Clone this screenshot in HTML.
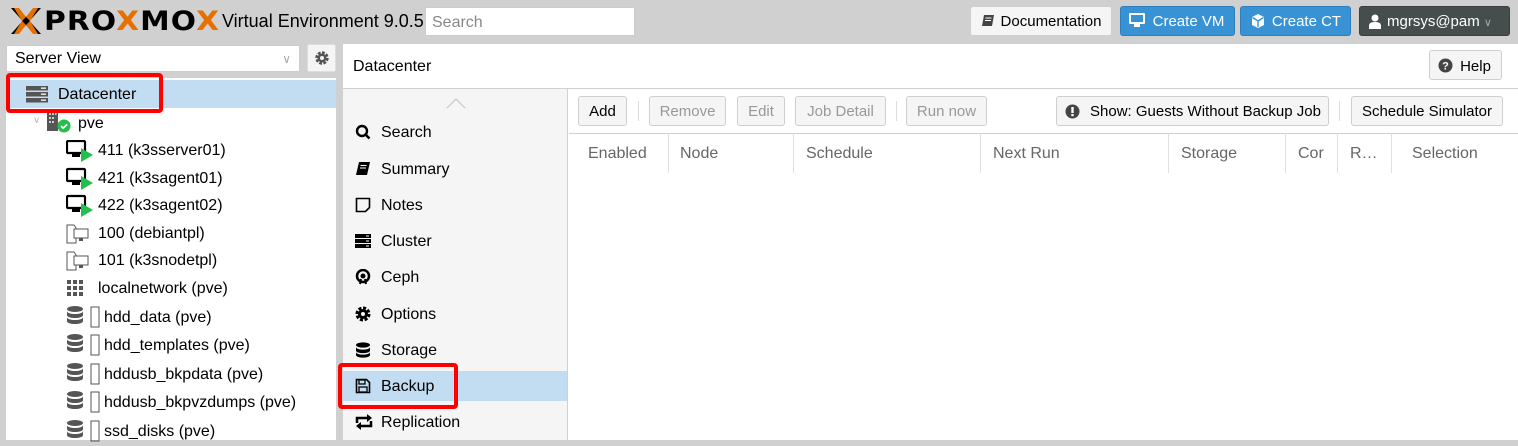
<!DOCTYPE html>
<html><head><meta charset="utf-8"><style>
*{box-sizing:border-box;margin:0;padding:0}
body{width:1518px;height:440px;overflow:hidden;background:#d0d0d0;font-family:"Liberation Sans",Arial,sans-serif;font-size:16px;color:#000;position:relative}
.a{position:absolute}
.btn{position:absolute;height:30px;border:1px solid #cfcfcf;border-radius:3px;background:#f5f5f5;font-size:15px;line-height:29px;text-align:center;color:#000}
.dis{color:#999}
.tr{position:absolute;left:0;height:28px;line-height:30px;white-space:nowrap;font-size:16px}
.nv{position:absolute;left:0;width:224px;height:30px;line-height:31px;padding-left:38px;color:#000;font-size:16px}
.nv svg{position:absolute;left:12px;top:7px}
.gh{position:absolute;top:133px;height:40px;line-height:42px;color:#666;padding-left:19px;border-right:1px solid #e0e0e0;overflow:hidden;white-space:nowrap;font-size:16px}
.red{position:absolute;border:4px solid #f00;border-radius:4px}
</style></head><body>
<svg class="a" style="left:10px;top:7px" width="32" height="28" viewBox="0 0 32 28"><path d="M1 1 L8 1 L31 27 L24 27 Z" fill="#000"/><path d="M24 1 L31 1 L8 27 L1 27 Z" fill="#000"/><path d="M4 1 L9 1 L16 10 L12 14 Z M20 14 L16 18 L23 27 L28 27Z" fill="#e57000"/><path d="M28 1 L23 1 L16 10 L20 14 Z M12 14 L16 18 L9 27 L4 27Z" fill="#e57000"/></svg>
<div class="a" style="left:44px;top:6px;font-size:27px;font-weight:900;letter-spacing:1px;transform:scaleX(1.1);transform-origin:left;color:#000;font-family:'DejaVu Sans',sans-serif">PRO<span style="color:#e57000">X</span>MO<span style="color:#e57000">X</span></div>
<div class="a" style="left:222px;top:11px;font-size:18px;white-space:nowrap">Virtual Environment 9.0.5</div>
<div class="a" style="left:425px;top:7px;width:210px;height:29px;background:#fff;border:1px solid #ccc;color:#888;font-size:16px;line-height:29px;padding-left:6px">Search</div>
<div class="btn" style="left:970px;top:6px;width:142px;height:30px;background:#f5f5f5;padding-left:20px;line-height:30px">Documentation<svg class="a" style="left:10px;top:7px" width="14" height="14" viewBox="0 0 14 14"><path d="M3 1h10l-2 11H1z" fill="#444"/><path d="M4.5 4h6M4 6.5h6" stroke="#fff" stroke-width="1"/></svg></div>
<div class="btn" style="left:1120px;top:6px;width:115px;background:#3892d4;border-color:#2f7fbf;color:#fff;padding-left:22px;line-height:30px">Create VM<svg class="a" style="left:7px;top:5px" width="18" height="16" viewBox="0 0 18 16"><rect x="1" y="1" width="16" height="11" rx="1" fill="#fff"/><rect x="3" y="3" width="12" height="7" fill="#3892d4"/><rect x="6" y="12" width="6" height="3" fill="#fff"/></svg></div>
<div class="btn" style="left:1240px;top:6px;width:111px;background:#3892d4;border-color:#2f7fbf;color:#fff;padding-left:22px;line-height:30px">Create CT<svg class="a" style="left:9px;top:6px" width="16" height="16" viewBox="0 0 16 16"><path d="M8 1l6 3v8l-6 3-6-3V4z" fill="#fff"/><path d="M8 8L2.5 4.5M8 8l5.5-3.5M8 8v6" stroke="#3892d4" stroke-width="1.4" fill="none"/></svg></div>
<div class="btn" style="left:1359px;top:6px;width:151px;background:#464d4d;border-color:#3a3f3f;color:#fff;padding-left:10px;line-height:30px">mgrsys@pam <span style="color:#aaa;font-size:11px">&#8744;</span><svg class="a" style="left:9px;top:7px" width="12" height="15" viewBox="0 0 12 15"><circle cx="6" cy="4" r="3.5" fill="#fff"/><path d="M0 15v-3c0-3 2-4 6-4s6 1 6 4v3z" fill="#fff"/></svg></div>

<div class="a" style="left:6px;top:45px;width:294px;height:27px;background:#fff;border:1px solid #ccc;line-height:26px;padding-left:8px;font-size:16px">Server View<span class="a" style="right:8px;top:0;color:#aaa;font-size:12px">&#8744;</span></div>
<div class="a" style="left:307px;top:44px;width:29px;height:28px;background:#f5f5f5;border:1px solid #ddd;border-radius:2px"><svg class="a" style="left:6px;top:5px" width="16" height="16" viewBox="0 0 16 16"><circle cx="8" cy="8" r="5" fill="none" stroke="#555" stroke-width="3.5" stroke-dasharray="2.6 1.3"/><circle cx="8" cy="8" r="4.5" fill="#555"/><circle cx="8" cy="8" r="2" fill="#f5f5f5"/></svg></div>
<div class="a" style="left:6px;top:78px;width:330px;height:362px;background:#fff;overflow:hidden">
<div class="a" style="left:0;top:2px;width:330px;height:28px;background:#c2ddf2"></div>
<div class="tr" style="top:2px;left:52px">Datacenter</div>
<svg class="a" style="left:20px;top:8px" width="22" height="17" viewBox="0 0 22 17"><g fill="#555"><rect y="0" width="22" height="4.5"/><rect y="6" width="22" height="4.5"/><rect y="12" width="22" height="4.5"/></g><g fill="#fff"><rect x="15" y="1.5" width="5" height="1.3"/><rect x="15" y="7.5" width="5" height="1.3"/><rect x="15" y="13.5" width="5" height="1.3"/></g></svg>
<div class="tr" style="top:31px;left:72px">pve</div>
<span class="a" style="left:27px;top:37px;color:#bbb;font-size:10px">&#8744;</span>
<svg class="a" style="left:41px;top:33px" width="26" height="22" viewBox="0 0 26 22"><rect x="0" y="0" width="11" height="20" fill="#555"/><g fill="#ccc"><rect x="2" y="2" width="2" height="2"/><rect x="5" y="2" width="2" height="2"/><rect x="8" y="2" width="1.5" height="2"/><rect x="2" y="6" width="2" height="2"/><rect x="5" y="6" width="2" height="2"/><rect x="2" y="10" width="2" height="2"/><rect x="5" y="10" width="2" height="2"/></g><circle cx="17" cy="15" r="6.5" fill="#21bf4b"/><path d="M14 15l2.2 2.2 4-4" stroke="#fff" stroke-width="1.8" fill="none"/></svg>
<div class="tr" style="top:58px;left:92px">411 (k3sserver01)</div>
<div class="tr" style="top:86px;left:92px">421 (k3sagent01)</div>
<div class="tr" style="top:113px;left:92px">422 (k3sagent02)</div>
<div class="tr" style="top:141px;left:92px">100 (debiantpl)</div>
<div class="tr" style="top:168px;left:92px">101 (k3snodetpl)</div>
<div class="tr" style="top:196px;left:92px">localnetwork (pve)</div>
<div class="tr" style="top:225px;left:98px">hdd_data (pve)</div>
<div class="tr" style="top:253px;left:98px">hdd_templates (pve)</div>
<div class="tr" style="top:282px;left:98px">hddusb_bkpdata (pve)</div>
<div class="tr" style="top:310px;left:98px">hddusb_bkpvzdumps (pve)</div>
<div class="tr" style="top:339px;left:98px">ssd_disks (pve)</div>
</div>
<svg class="a" style="left:66px;top:140px" width="30" height="140" viewBox="0 0 30 140">
<g id="vm"><rect x="1" y="1" width="18" height="12" rx="1" fill="none" stroke="#000" stroke-width="2.2"/><rect x="6" y="13" width="8" height="4" fill="#000"/><path d="M15 8l12 7-12 7z" fill="#21bf4b"/></g>
<use href="#vm" y="28"/><use href="#vm" y="55"/>
<g transform="translate(0,84)"><path d="M1 1h7l2 3v15H1z" fill="#fff" stroke="#555"/><rect x="8" y="5" width="14" height="9" fill="#fff" stroke="#555"/><rect x="13" y="14" width="4" height="3" fill="#555"/></g>
<g transform="translate(0,111)"><path d="M1 1h7l2 3v15H1z" fill="#fff" stroke="#555"/><rect x="8" y="5" width="14" height="9" fill="#fff" stroke="#555"/><rect x="13" y="14" width="4" height="3" fill="#555"/></g>
</svg>
<svg class="a" style="left:67px;top:280px" width="16" height="16" viewBox="0 0 16 16"><g fill="#555"><rect x="0" y="0" width="4" height="4"/><rect x="6" y="0" width="4" height="4"/><rect x="12" y="0" width="4" height="4"/><rect x="0" y="6" width="4" height="4"/><rect x="6" y="6" width="4" height="4"/><rect x="12" y="6" width="4" height="4"/><rect x="0" y="12" width="4" height="4"/><rect x="6" y="12" width="4" height="4"/><rect x="12" y="12" width="4" height="4"/></g></svg>
<svg class="a" style="left:67px;top:306px" width="36" height="140" viewBox="0 0 36 140">
<g id="db"><ellipse cx="8" cy="3" rx="8" ry="3" fill="#555"/><path d="M0 5c0 4 16 4 16 0v4c0 4-16 4-16 0z M0 11c0 4 16 4 16 0v4c0 4-16 4-16 0z" fill="#555"/><rect x="24" y="1" width="8" height="20" fill="none" stroke="#555"/></g>
<use href="#db" y="28"/><use href="#db" y="57"/><use href="#db" y="85"/><use href="#db" y="114"/>
</svg>
<div class="red" style="left:6px;top:73px;width:157px;height:40px"></div>

<div class="a" style="left:343px;top:44px;width:1175px;height:396px;background:#fff"></div>
<div class="a" style="left:353px;top:58px;font-size:16px">Datacenter</div>
<div class="btn" style="left:1429px;top:50px;width:73px;height:30px;padding-left:20px;line-height:31px">Help<svg class="a" style="left:8px;top:7px" width="15" height="15" viewBox="0 0 15 15"><circle cx="7.5" cy="7.5" r="7" fill="#444"/><text x="7.5" y="11.5" font-size="11" font-weight="bold" fill="#fff" text-anchor="middle" font-family="Liberation Sans">?</text></svg></div>
<div class="a" style="left:343px;top:88px;width:1175px;height:1px;background:#d0d0d0"></div>
<div class="a" style="left:343px;top:89px;width:225px;height:351px;background:#f5f5f5;border-right:1px solid #d0d0d0">
<svg class="a" style="left:103px;top:9px" width="20" height="11" viewBox="0 0 20 11"><path d="M1 10L10 1l9 9" stroke="#ccc" fill="none" stroke-width="1.3"/></svg>
<div class="nv" style="top:28px">Search<svg width="16" height="16" viewBox="0 0 16 16"><circle cx="7" cy="7" r="5" fill="none" stroke="#000" stroke-width="2.4"/><path d="M10 10l4.5 4.5" stroke="#000" stroke-width="2.6"/></svg></div>
<div class="nv" style="top:65px">Summary<svg width="16" height="16" viewBox="0 0 16 16"><path d="M4 1h11l-3 13H1z" fill="#000"/><path d="M5.5 4.5h6M5 7h6" stroke="#fff"/></svg></div>
<div class="nv" style="top:101px">Notes<svg width="16" height="16" viewBox="0 0 16 16"><path d="M1.5 1.5h13v9l-4 4h-9z" fill="none" stroke="#000" stroke-width="1.6"/></svg></div>
<div class="nv" style="top:137px">Cluster<svg width="16" height="16" viewBox="0 0 16 16"><g fill="#000"><rect y="1" width="16" height="4"/><rect y="6" width="16" height="4"/><rect y="11" width="16" height="4"/></g><g fill="#fff"><rect x="11" y="2.5" width="3" height="1"/><rect x="11" y="7.5" width="3" height="1"/><rect x="11" y="12.5" width="3" height="1"/></g></svg></div>
<div class="nv" style="top:173px">Ceph<svg width="16" height="16" viewBox="0 0 16 16"><circle cx="8" cy="7" r="6" fill="none" stroke="#000" stroke-width="2.5"/><circle cx="8" cy="7" r="2.5" fill="#000"/><path d="M5 15l1-5M11 15l-1-5" stroke="#000" stroke-width="2"/></svg></div>
<div class="nv" style="top:210px">Options<svg width="16" height="16" viewBox="0 0 16 16"><circle cx="8" cy="8" r="5.5" fill="none" stroke="#000" stroke-width="4" stroke-dasharray="2.8 1.5"/><circle cx="8" cy="8" r="5" fill="#000"/><circle cx="8" cy="8" r="2" fill="#f5f5f5"/></svg></div>
<div class="nv" style="top:246px">Storage<svg width="16" height="16" viewBox="0 0 16 16"><ellipse cx="8" cy="3" rx="7" ry="2.6" fill="#000"/><path d="M1 5c0 3.5 14 3.5 14 0v3.5c0 3.5-14 3.5-14 0z M1 10c0 3.5 14 3.5 14 0v3c0 3.5-14 3.5-14 0z" fill="#000"/></svg></div>
<div class="nv" style="top:282px;background:#c2ddf2">Backup<svg width="16" height="16" viewBox="0 0 16 16"><path d="M1.5 1.5h10l3 3v10h-13z" fill="none" stroke="#000" stroke-width="1.6"/><rect x="4" y="2" width="6" height="4" fill="none" stroke="#000" stroke-width="1.3"/><rect x="4" y="9" width="8" height="5" fill="none" stroke="#000" stroke-width="1.3"/></svg></div>
<div class="nv" style="top:318px">Replication<svg width="18" height="16" viewBox="0 0 18 16"><path d="M2 9V4h11" stroke="#000" stroke-width="2.5" fill="none"/><path d="M12 0l5 4-5 4z" fill="#000"/><path d="M16 7v5H5" stroke="#000" stroke-width="2.5" fill="none"/><path d="M6 8l-5 4 5 4z" fill="#000"/></svg></div>
</div>
<div class="red" style="left:338px;top:363px;width:120px;height:46px"></div>

<div class="btn" style="left:578px;top:96px;width:49px">Add</div>
<div class="a" style="left:638px;top:101px;width:1px;height:20px;background:#ddd"></div>
<div class="btn dis" style="left:649px;top:96px;width:77px">Remove</div>
<div class="btn dis" style="left:737px;top:96px;width:48px">Edit</div>
<div class="btn dis" style="left:795px;top:96px;width:91px">Job Detail</div>
<div class="a" style="left:896px;top:101px;width:1px;height:20px;background:#ddd"></div>
<div class="btn dis" style="left:906px;top:96px;width:81px">Run now</div>
<div class="btn" style="left:1056px;top:96px;width:273px;padding-left:26px">Show: Guests Without Backup Job<svg class="a" style="left:8px;top:7px" width="15" height="15" viewBox="0 0 15 15"><circle cx="7.5" cy="7.5" r="7" fill="#444"/><rect x="6.3" y="3" width="2.4" height="6" fill="#fff"/><rect x="6.3" y="10" width="2.4" height="2.2" fill="#fff"/></svg></div>
<div class="a" style="left:1339px;top:101px;width:1px;height:20px;background:#ddd"></div>
<div class="btn" style="left:1351px;top:96px;width:152px">Schedule Simulator</div>
<div class="a" style="left:569px;top:133px;width:949px;height:1px;background:#d0d0d0"></div>
<div class="gh" style="left:569px;width:100px">Enabled</div>
<div class="gh" style="left:669px;width:125px;padding-left:11px">Node</div>
<div class="gh" style="left:794px;width:187px;padding-left:12px">Schedule</div>
<div class="gh" style="left:981px;width:188px;padding-left:12px">Next Run</div>
<div class="gh" style="left:1169px;width:117px;padding-left:12px">Storage</div>
<div class="gh" style="left:1286px;width:52px;padding-left:12px">Cor</div>
<div class="gh" style="left:1338px;width:54px;padding-left:12px">R…</div>
<div class="gh" style="left:1392px;width:126px;padding-left:20px;border-right:none">Selection</div>
</body></html>
